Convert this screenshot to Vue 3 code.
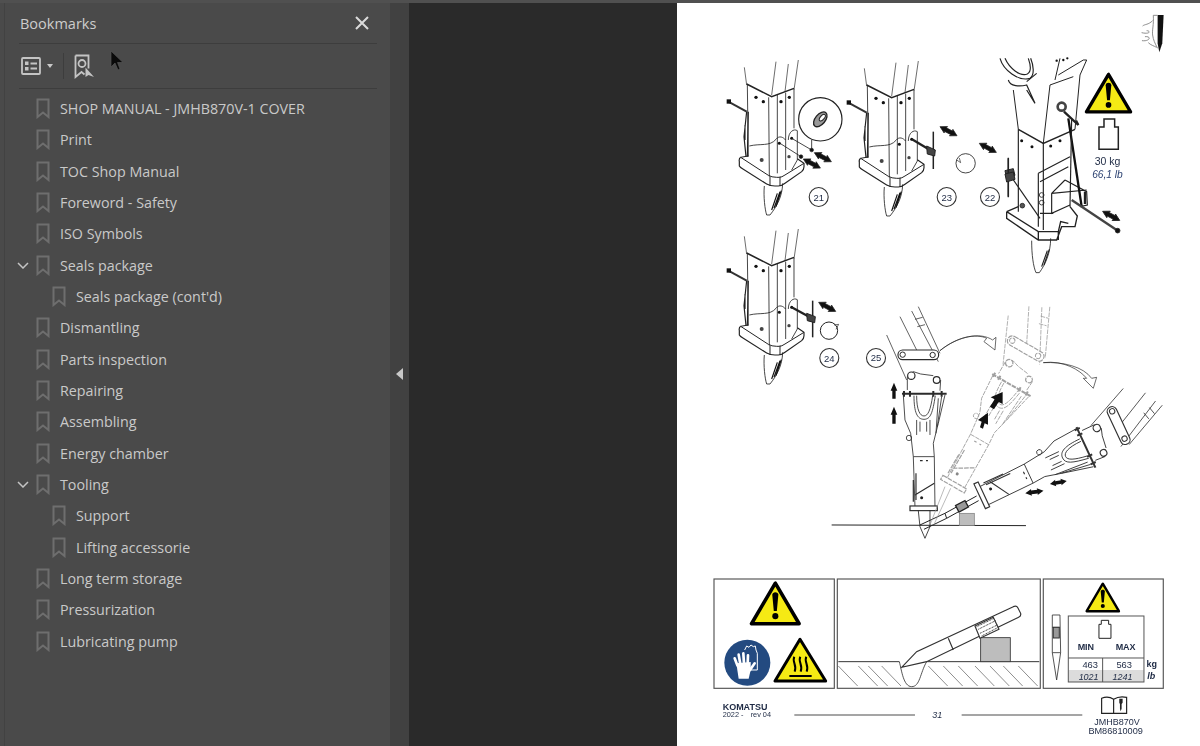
<script setup>
const bookmarks = [
  { label: 'SHOP MANUAL - JMHB870V-1 COVER' },
  { label: 'Print' },
  { label: 'TOC Shop Manual' },
  { label: 'Foreword - Safety' },
  { label: 'ISO Symbols' },
  { label: 'Seals package', open: true },
  { label: "Seals package (cont'd)", child: true },
  { label: 'Dismantling' },
  { label: 'Parts inspection' },
  { label: 'Repairing' },
  { label: 'Assembling' },
  { label: 'Energy chamber' },
  { label: 'Tooling', open: true },
  { label: 'Support', child: true },
  { label: 'Lifting accessorie', child: true },
  { label: 'Long term storage' },
  { label: 'Pressurization' },
  { label: 'Lubricating pump' }
]
const hatch = [430, 490, 520, 560, 700, 745, 790, 840, 885, 925, 970]
</script>

<template>
  <div class="app">
    <div class="topbar"></div>
    <div class="main">
      <aside class="panel">
        <header class="panel-head">
          <span>Bookmarks</span>
          <svg class="close" width="14" height="14" viewBox="0 0 14 14">
            <path d="M1 1 13 13M13 1 1 13" />
          </svg>
        </header>
        <div class="toolbar">
          <svg width="20" height="18" viewBox="0 0 20 18" class="tool">
            <rect x="1" y="1" width="18" height="16" rx="1" />
            <rect x="4" y="4.500" width="3.500" height="3.500" class="solid" />
            <rect x="4" y="10" width="3.500" height="3.500" class="solid" />
            <path d="M9.500 6.500h6.500M9.500 11.500h6.500" />
          </svg>
          <span class="caret"></span>
          <span class="sep"></span>
          <svg width="22" height="25" viewBox="0 0 22 25" class="tool">
            <path d="M1.500 1.500h13v13M1.500 1.500v21.500l6-5 3 2.500" />
            <circle cx="8" cy="9.500" r="3.500" />
            <path d="M11.500 13.500v9.500l3-2 5.500 2z" class="solid" />
          </svg>
        </div>
        <ul class="list">
          <li v-for="b in bookmarks" :key="b.label" class="row" :class="{ child: b.child }">
            <svg v-if="b.open" class="chev" width="12" height="7" viewBox="0 0 12 7"><path d="M1 1l5 5 5-5" /></svg>
            <svg class="mark" width="14" height="21" viewBox="0 0 14 21"><path d="M1.500 1.500h11v17.500l-5.500-4.500-5.500 4.500z" /></svg>
            <span>{{ b.label }}</span>
          </li>
        </ul>
      </aside>
      <div class="strip"><span class="collapse"></span></div>
      <div class="gap"></div>
      <div class="page">
        <svg class="sheet" width="523" height="743" viewBox="677 3 523 743">
          <defs>
            <g id="warn">
              <path d="M50 5 3 85H97Z" fill="#f5ea14" stroke="#000" stroke-width="7" stroke-linejoin="round" />
              <path d="M44 28c0-7 12-7 12 0l-3 32h-6z" fill="#000" />
              <circle cx="50" cy="70" r="6" fill="#000" />
            </g>
            <g id="arrow">
              <path d="M0 0 20-11 19-6H39L38-11 58 0 38 11 39 6H19L20 11Z" fill="#111" />
            </g>
            <g id="column" fill="none" stroke="#222" stroke-width="2.500">
              <path d="M73 22 80 75M168 5 155 105M205 12 195 95M235 0 222 90" stroke-width="2" />
              <path d="M80 72 155 110 222 85" stroke-width="4.500" />
              <path d="M82 75 85 290M146 112 148 350M172 105 172 340M197 98 197 330M222 88 222 205" />
              <path d="M88 258C120 250 150 260 168 238 178 225 190 232 197 240M205 240C205 215 222 205 232 212V300L215 330" />
              <path d="M62 292Q56 296 58 305V318Q60 322 70 328L140 372Q150 378 165 378H175Q185 378 195 370L245 335Q252 328 252 320V310L232 296" stroke-width="3.500" />
              <path d="M62 292 145 346Q155 352 170 352H178Q185 352 195 345L252 310M62 292 85 288M150 350V378M180 350V378" stroke-width="3" />
              <path d="M133 378C130 410 135 450 140 465H150C170 440 187 410 188 370" />
              <path d="M155 450 172 400M162 445 180 395M168 440 184 392" stroke-width="3.500" stroke="#111" />
              <path d="M25 125 80 155" stroke-width="6" stroke="#333" />
              <path d="M80 155 72 230 78 290M85 155 82 290M75 195V240" stroke-width="3.500" />
              <g fill="#111" stroke="none">
                <rect x="20" y="118" width="13" height="13" />
                <circle cx="108" cy="112" r="5" /><circle cx="130" cy="125" r="5" />
                <circle cx="183" cy="125" r="5" /><circle cx="208" cy="112" r="5" />
                <circle cx="125" cy="300" r="6" fill="#444" /><circle cx="178" cy="250" r="4.500" />
                <circle cx="215" cy="235" r="4.500" /><circle cx="207" cy="290" r="5" fill="#444" />
              </g>
            </g>
            <g id="brk" fill="none">
              <path d="M560 315 620 450M600 260 650 360M635 243 715 395M655 230 720 370M645 268 668 262M652 290 675 284" stroke-width="2.200" />
              <rect x="594" y="360" width="122" height="29" rx="14" stroke-width="3.500" fill="#fff" />
              <circle cx="608" cy="374" r="8" stroke-width="3" /><circle cx="698" cy="375" r="8" stroke-width="3" />
              <path d="M622 440 640 425 662 432 700 437M622 440V480M722 450 720 482" stroke-width="2.500" />
              <circle cx="634" cy="437" r="11" stroke-width="3.500" fill="#fff" /><circle cx="710" cy="450" r="10" stroke-width="3.500" fill="#fff" />
              <path d="M606 491H740" stroke-width="6" />
              <path d="M612 483V500M630 483V500M700 483V500M725 483V500" stroke-width="6" />
              <path d="M610 495 615 570 632 610 640 680 645 830M735 495 715 580 700 640 703 680 705 830M640 680H703" stroke-width="2.500" />
              <path d="M642 497C642 548 652 568 672 568S698 548 706 497M650 497C650 540 660 558 672 558S692 540 698 497" stroke-width="2.500" />
              <path d="M650 570V615M690 570V615M660 575V605M680 575V605M715 505 708 610M725 500 712 590" stroke-width="2.500" />
              <circle cx="627" cy="624" r="8" stroke-width="2.500" />
              <path d="M640 750V815M648 730V810M645 795 703 760M660 692H668M678 692H684" stroke-width="3.500" />
              <circle cx="665" cy="803" r="4.500" fill="currentColor" stroke="none" />
              <rect x="630" y="828" width="82" height="14" stroke-width="3.500" fill="#fff" />
            </g>
          </defs>

          <!-- corner icon -->
          <g transform="translate(700 0) scale(.3333)" fill="none" stroke="#777" stroke-width="2.500">
            <path d="M1373 45H1391L1387 130 1378 157 1373 130z" fill="#111" stroke="none" />
            <path d="M1360 46H1373M1360 46C1362 75 1356 90 1358 105S1365 130 1373 145" />
            <path d="M1358 62C1345 75 1335 72 1328 78M1340 92C1352 92 1352 104 1325 98M1335 110C1356 108 1350 125 1326 122M1345 128C1352 135 1362 138 1370 142" />
          </g>

          <!-- steps 21, 23, 24 -->
          <use href="#column" transform="translate(720 60) scale(.3333)" />
          <use href="#column" transform="translate(840 61) scale(.3333)" />
          <use href="#column" transform="translate(720 229) scale(.3333)" />

          <g transform="translate(720 60) scale(.3333)" fill="none" stroke="#222" stroke-width="2">
            <circle cx="301" cy="178" r="65" stroke-width="3.500" />
            <ellipse cx="301" cy="178" rx="26" ry="15" transform="rotate(-50 301 178)" fill="#999" stroke-width="4" />
            <ellipse cx="307" cy="173" rx="12" ry="6" transform="rotate(-50 307 173)" fill="#fff" stroke-width="3" />
            <path d="M275 240V270M215 235 275 270M180 250 243 290" stroke-width="2.500" />
            <circle cx="275" cy="270" r="5.500" fill="#111" /><circle cx="243" cy="290" r="5.500" fill="#111" />
            <use href="#arrow" transform="translate(283 278) rotate(28)" />
            <use href="#arrow" transform="translate(250 297) rotate(28)" />
          </g>

          <g transform="translate(700 0) scale(.3333)" fill="none" stroke="#222" stroke-width="2">
            <path d="M636 418 690 450" stroke-width="7" stroke="#222" />
            <path d="M700 395V507" stroke-width="4.500" />
            <path d="M680 438 706 450 704 468 682 462Z" fill="#444" stroke-width="3" />
            <use href="#arrow" transform="translate(720 380) rotate(28)" />
            <use href="#arrow" transform="translate(838 430) rotate(28)" />
            <circle cx="797" cy="490" r="29" stroke-width="2.500" />
            <path d="M770 480 782 488 778 474" />
            <path d="M925 473V592" stroke-width="4" />
            <path d="M915 512 940 506 945 526 920 534Z" fill="#444" stroke-width="3" />
          </g>

          <g transform="translate(700 230) scale(.3333)" fill="none" stroke="#222" stroke-width="2">
            <path d="M275 232 330 262" stroke-width="7" stroke="#222" />
            <path d="M338 212V322" stroke-width="4.500" />
            <path d="M320 250 346 260 344 278 322 272Z" fill="#444" stroke-width="3" />
            <use href="#arrow" transform="translate(356 217) rotate(28)" />
            <circle cx="387" cy="302" r="26" stroke-width="3" />
            <path d="M402 285 416 283 408 298" stroke-width="2" />
          </g>

          <!-- step 22 -->
          <g transform="translate(990 50) scale(.3333)" fill="none" stroke="#222" stroke-width="2.500">
            <path d="M30 25C40 60 85 95 120 85 135 75 130 45 122 25M45 25C58 55 90 80 112 72 125 65 122 45 115 25" stroke-width="3.500" />
            <path d="M55 90C60 110 90 110 110 105L135 160 110 120M110 95 140 70" stroke-width="3.500" />
            <path d="M70 120 85 238M180 105 160 280M180 105 250 80M210 25 195 90M205 75 280 30 290 30 270 75 255 238" stroke-width="3" />
            <path d="M85 238 160 280 255 238" stroke-width="4.500" />
            <path d="M85 238V485M160 280V540M145 370V530M240 320 145 370M150 395 235 350" stroke-width="3.500" />
            <path d="M185 430 290 420M185 430V490L240 465M225 390 290 425 292 465 270 470M225 390 185 430M150 490 190 490" stroke-width="3.500" />
            <circle cx="155" cy="435" r="7" /><circle cx="155" cy="458" r="7" />
            <path d="M50 485V505L145 570H200L215 530 255 530 262 498 240 470M50 485 145 545H205L212 515 235 520M50 485 85 470M145 545V570M205 545V570" stroke-width="4" />
            <path d="M125 572C125 615 130 650 138 668H148C165 645 182 610 182 565" />
            <path d="M155 650 172 602M162 645 178 598" stroke-width="3.500" />
            <circle cx="215" cy="170" r="12" stroke="#444" stroke-width="8" />
            <path d="M222 185 265 225 258 212" stroke-width="7" />
            <path d="M235 205 275 470" stroke-width="7" stroke="#111" />
            <path d="M245 205 240 470" stroke-width="3.500" />
            <path d="M245 450 380 540" stroke-width="7" stroke="#444" />
            <circle cx="383" cy="542" r="7" fill="#111" />
            <path d="M60 375 150 505" stroke-width="3.500" />
            <path d="M285 425V462" stroke-width="7" />
            <circle cx="97" cy="467" r="7" fill="#555" />
            <path d="M55 325V440" stroke-width="4.500" />
            <path d="M45 372 70 366 75 388 50 396Z" fill="#444" stroke-width="3" />
            <g fill="#111" stroke="none">
              <circle cx="95" cy="272" r="4.500" /><circle cx="126" cy="290" r="4.500" /><circle cx="182" cy="288" r="4.500" /><circle cx="210" cy="272" r="4.500" />
              <circle cx="200" cy="32" r="3.500" /><circle cx="220" cy="30" r="3.500" /><circle cx="232" cy="25" r="3.500" />
            </g>
            <use href="#arrow" transform="translate(338 484) rotate(28)" />
          </g>
          <g transform="translate(1085 72) scale(.47)"><use href="#warn" /></g>
          <g transform="translate(990 50) scale(.3333)" fill="none" stroke="#222" stroke-width="4.500">
            <path d="M342 207H374V231H385V298H327V231H342z" />
          </g>
          <text class="t navy" x="1107.500" y="165" text-anchor="middle" font-size="10.500">30 kg</text>
          <text class="t blue" x="1107.500" y="178" text-anchor="middle" font-size="10.200" font-style="italic">66,1 lb</text>

          <g class="num" fill="#fff" stroke="#333">
            <circle cx="818.700" cy="197" r="9.500" /><circle cx="946.700" cy="197" r="9.500" /><circle cx="990" cy="197" r="9.500" />
            <circle cx="829.300" cy="358" r="9.500" /><circle cx="876" cy="358" r="9.500" />
          </g>
          <g class="t navy" font-size="9.500" text-anchor="middle">
            <text x="818.700" y="200.500">21</text><text x="946.700" y="200.500">23</text><text x="990" y="200.500">22</text>
            <text x="829.300" y="361.500">24</text><text x="876" y="361">25</text>
          </g>

          <!-- step 25 -->
          <g transform="translate(700 230) scale(.3333)">
            <use href="#brk" transform="translate(760 762) rotate(30) translate(-670 -835)" stroke="#a0a0a0" stroke-dasharray="14 3" color="#888" />
            <use href="#brk" transform="translate(845 795) rotate(65) translate(-670 -835)" stroke="#333" color="#222" />
            <use href="#brk" stroke="#2b2b2b" color="#222" />
            <g fill="none" stroke="#222" stroke-width="2.500">
              <path d="M655 842 660 890 675 925 690 890 690 842" />
              <path d="M660 885 735 850 830 798M672 898 740 865 836 812M735 850 740 865" stroke-width="3" />
              <path d="M690 885 735 770M700 888 752 775" stroke="#999" stroke-width="2" />
              <path d="M395 885 978 887" stroke-width="3" />
              <path d="M720 362C770 320 830 310 860 325L852 335 885 360 888 322 878 330C840 305 775 318 720 362" stroke-width="2" />
              <path d="M1030 398C1090 390 1140 420 1160 445L1150 445 1180 475 1190 442 1175 445C1150 410 1090 395 1030 398" stroke-width="2" />
              <rect x="770" y="818" width="32" height="22" transform="rotate(-28 786 829)" fill="#999" stroke-width="4" />
            </g>
            <rect x="778" y="850" width="45" height="37" fill="#bdbdbd" stroke="#777" stroke-width="2" />
            <g fill="#111">
              <path d="M582 458 592 482H587V506H577V482H572zM582 530 592 554H587V581H577V554H572z" />
              <path d="M908 486 908 522 896 516 882 538 870 530 884 508 872 502zM864 548 864 584 854 580 849 596 840 592 845 575 834 570z" />
            </g>
            <use href="#arrow" transform="translate(976 790) rotate(-8) scale(.95)" />
            <use href="#arrow" transform="translate(1050 762) rotate(-10) scale(.88)" />
          </g>

          <!-- bottom panels -->
          <g transform="translate(700 570) scale(.3333)">
            <g fill="none" stroke="#555" stroke-width="3.500">
              <rect x="42" y="27" width="361" height="328" />
              <rect x="412" y="27" width="609" height="328" />
              <rect x="1030" y="27" width="360" height="328" />
            </g>
            <use href="#warn" transform="translate(150 32) scale(1.520)" />
            <use href="#warn" transform="translate(1157 36) scale(1.030)" />
            <path d="M300 208 225 333H377Z" fill="#f5ea14" stroke="#000" stroke-width="9" stroke-linejoin="round" />
            <path d="M268 318H335" stroke="#000" stroke-width="6" />
            <path d="M283 260C275 275 292 285 284 305M301 260C293 275 310 285 302 305M319 260C311 275 328 285 320 305" fill="none" stroke="#000" stroke-width="6" />
            <circle cx="142" cy="278" r="69" fill="#234a80" />
            <path d="M134 240 140 228 147 232 153 225 160 230 166 228 168 240 172 250V300H152" fill="none" stroke="#fff" stroke-width="3" />
            <path d="M112 286 104 265M121 282 116 254M132 280 130 250M143 282 144 256M150 300 164 280" stroke="#fff" stroke-width="8" stroke-linecap="round" />
            <path d="M109 280 152 276 152 300 146 326H116Z" fill="#fff" />

            <g fill="none" stroke="#333" stroke-width="2">
              <path d="M415 275H598M680 275H1018" stroke-width="3" />
              <path v-for="x in hatch" :key="x" :d="`M${x - 15} 288 l${58} 60`" stroke="#555" />
              <path d="M598 275C605 300 610 350 635 350S660 310 680 275" stroke-width="2.500" />
              <path d="M605 292 650 245 940 110Q950 106 954 114L962 130Q964 138 956 142L680 275ZM745 205 760 240" fill="#fff" stroke-width="3.500" />
              <rect x="842" y="203" width="89" height="72" fill="#bdbdbd" stroke-width="2.500" />
              <path d="M825 168 880 142 897 178 840 205Z" fill="#fff" stroke-width="3.500" />
              <path d="M830 170 882 145M835 178 887 152M840 190 892 165M845 198 895 172" stroke-width="3" stroke-dasharray="3 2" />
              <path d="M1057 135H1080L1082 248 1070 330 1057 248Z M1057 172H1080M1057 248H1082" stroke-width="2.500" />
              <rect x="1060" y="172" width="18" height="32" fill="#999" stroke-width="3" />
            </g>
            <rect x="1106" y="300" width="225" height="36" fill="#dcdcdc" />
            <g fill="none" stroke="#555" stroke-width="3">
              <rect x="1105" y="138" width="227" height="198" />
              <path d="M1105 264H1332M1208 264V336" />
            </g>
            <path d="M1204 151H1226V163H1233V205H1197V163H1204z" fill="none" stroke="#222" stroke-width="3" />
            <g class="t navy" font-size="27">
              <text x="1133" y="241" font-weight="700">MIN</text>
              <text x="1247" y="241" font-weight="700">MAX</text>
              <text x="1194" y="294" text-anchor="end" font-size="28">463</text>
              <text x="1296" y="294" text-anchor="end" font-size="28">563</text>
              <text x="1196" y="329" text-anchor="end" font-style="italic">1021</text>
              <text x="1298" y="329" text-anchor="end" font-style="italic">1241</text>
              <text x="1340" y="291" font-weight="700">kg</text>
              <text x="1342" y="328" font-style="italic" font-weight="700">lb</text>
              <text x="68" y="419" font-weight="700">KOMATSU</text>
              <text x="68" y="442" font-size="22">2022 -</text>
              <text x="152" y="442" font-size="22">rev 04</text>
              <text x="712" y="444" text-anchor="middle" font-style="italic">31</text>
              <text x="1251" y="465" text-anchor="middle">JMHB870V</text>
              <text x="1247" y="493" text-anchor="middle" font-size="27.500">BM86810009</text>
            </g>
            <path d="M283 435H645M785 435H1147" stroke="#888" stroke-width="4.500" />
            <path d="M1205 385C1222 378 1232 382 1241 388 1250 382 1262 378 1280 382V430H1241 1205ZM1241 388V430" fill="none" stroke="#222" stroke-width="3.500" />
            <path d="M1258 386h10v12l-3 4v14l-3 8-2-8v-14l-2-4z" fill="#222" />
          </g>
        </svg>
      </div>
    </div>

    <svg class="cursor" width="14" height="22" viewBox="0 0 14 22">
      <path d="M1 1V17L5 13 8 20 10 19 7.500 12.500H13Z" fill="#0a0a0a" stroke="#555" stroke-width=".7" />
    </svg>
  </div>
</template>

<style>
html, body { margin: 0; background: #2a2a2a; overflow: hidden; }
</style>

<style scoped>
.app {
  position: relative;
  width: 1200px;
  height: 746px;
  overflow: hidden;
  display: flex;
  flex-direction: column;
  font-family: "Open Sans", "Noto Sans", sans-serif;
}
.topbar { height: 3px; background: #505050; flex: none; }
.main { flex: 1; display: flex; min-height: 0; }

.panel {
  width: 390px;
  box-sizing: border-box;
  padding-left: 4px;
  background: #4a4a4a;
  flex: none;
  position: relative;
}
.panel::before {
  content: "";
  position: absolute;
  left: 4px;
  top: 0;
  bottom: 0;
  width: 1px;
  background: #424242;
}
.panel-head {
  height: 40px;
  margin: 0 13px 0 15px;
  display: flex;
  align-items: center;
  justify-content: space-between;
  border-bottom: 1px solid #3d3d3d;
  color: #cdcdcd;
  font-size: 14.500px;
  padding: 0 8px 0 1px;
}
.close path { stroke: #dadada; stroke-width: 2; fill: none; }
.toolbar {
  height: 44px;
  margin: 0 13px 0 15px;
  display: flex;
  align-items: center;
  border-bottom: 1px solid #3d3d3d;
  padding-left: 2px;
}
.tool * { fill: none; stroke: #c4c4c4; stroke-width: 1.800; }
.tool .solid { fill: #c4c4c4; stroke: none; }
.caret {
  margin-left: 6px;
  border: 3.500px solid transparent;
  border-top: 4px solid #c9c9c9;
  border-bottom: 0;
}
.sep { width: 1px; height: 26px; background: #3d3d3d; margin: 0 10px 0 10px; }

.list { list-style: none; margin: 4px 0 0; padding: 0; }
.row {
  position: relative;
  height: 31.330px;
  display: flex;
  align-items: center;
  padding-left: 32px;
  color: #c9c9c9;
  font-size: 14.300px;
}
.row.child { padding-left: 48px; }
.mark { margin-right: 10px; flex: none; }
.mark path { fill: none; stroke: #6e6e6e; stroke-width: 2; }
.chev { position: absolute; left: 13px; top: 12px; }
.chev path { fill: none; stroke: #c4c4c4; stroke-width: 1.500; }

.strip {
  width: 19px;
  flex: none;
  background: #414141;
  display: flex;
  align-items: center;
  justify-content: center;
}
.collapse {
  border: 6px solid transparent;
  border-right: 7px solid #c8c8c8;
  border-left: 0;
  margin-bottom: 2px;
}
.gap { width: 268px; flex: none; background: #2a2a2a; }
.page { flex: 1; background: #fff; min-width: 0; }
.sheet { display: block; filter: blur(.35px); }
.t { font-family: "Liberation Sans", Arial, sans-serif; }
.navy { fill: #1e2a44; }
.blue { fill: #2a4070; }
.num { stroke-width: 1.100; }
.cursor { position: absolute; left: 110px; top: 50px; }
</style>
